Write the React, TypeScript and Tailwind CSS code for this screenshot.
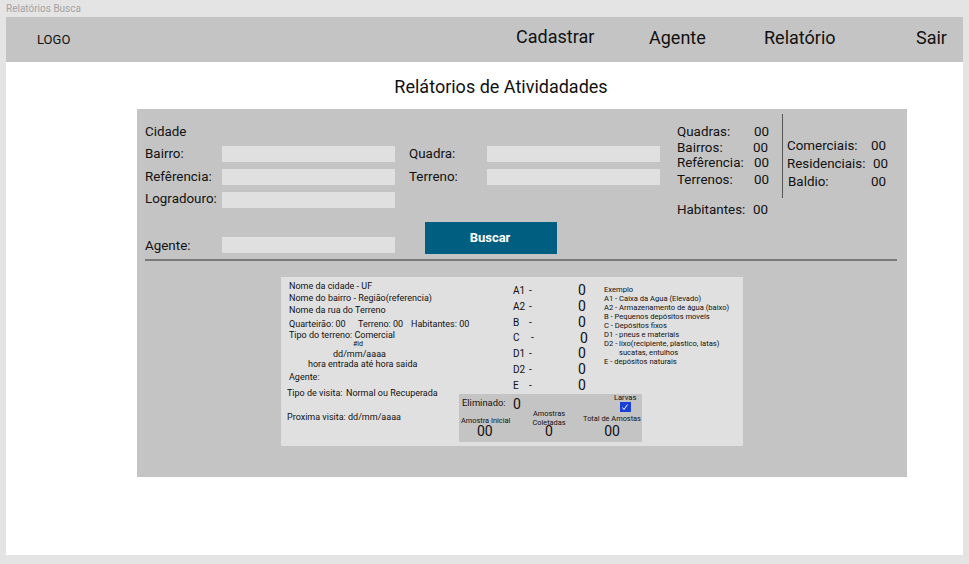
const navLinks = [
  { label: "Cadastrar", cls: "w-[133px] -mt-[2px]" },
  { label: "Agente", cls: "w-[115px]" },
  { label: "Relatório", cls: "w-[152px]" },
  { label: "Sair", cls: "" },
];

const containers = [
  { code: "A1", dash: "w-[16px]", y: "h-[16px]" },
  { code: "A2", dash: "w-[16px]", y: "h-[16px]" },
  { code: "B", dash: "w-[16px]", y: "h-[16px]" },
  { code: "C", dash: "w-[18px]", y: "h-[15px]" },
  { code: "D1", dash: "w-[16px]", y: "h-[16px]" },
  { code: "D2", dash: "w-[16px]", y: "h-[16px]" },
  { code: "E", dash: "w-[16px]", y: "h-[16px]" },
];

const examples = [
  "Exemplo",
  "A1 - Caixa da Agua (Elevado)",
  "A2 - Armazenamento de água (baixo)",
  "B - Pequenos depósitos moveis",
  "C - Depósitos fixos",
  "D1 - pneus e materiais",
  "D2 - lixo(recipiente, plastico, latas)",
];

function Field({ label, labelWidth }: { label: string; labelWidth: string }) {
  return (
    <div className="flex h-[23px] items-center">
      <span className={`${labelWidth} shrink-0 text-[13.4px] text-[#111]`}>{label}</span>
      <div className="h-[16px] w-[173px] bg-[#e0e0e0]" />
    </div>
  );
}

function Stat({ label, value, width, cls }: { label: string; value: string; width: string; cls: string }) {
  return (
    <div className={`flex items-center text-[13.4px] text-[#111] ${cls}`}>
      <span className={width}>{label}</span>
      <span>{value}</span>
    </div>
  );
}

function VisitCard() {
  return (
    <div className="ml-[136px] mt-[16px] flex h-[169px] w-[462px] bg-[#e0e0e0] text-[#111]">
      <div className="w-[178px] shrink-0 pl-[8px] pt-[3px] text-[9px] leading-[12px]">
        <div>Nome da cidade - UF</div>
        <div>Nome do bairro - Região(referencia)</div>
        <div>Nome da rua do Terreno</div>
        <div className="mt-[2px] flex whitespace-nowrap">
          <span className="w-[69px] shrink-0">Quarteirão: 00</span>
          <span className="w-[53px] shrink-0">Terreno: 00</span>
          <span className="shrink-0">Habitantes: 00</span>
        </div>
        <div className="leading-[10px]">Tipo do terreno: Comercial</div>
        <div className="pl-[64px] text-[7px] leading-[9px]">#id</div>
        <div className="pl-[44px] leading-[10px]">dd/mm/aaaa</div>
        <div className="pl-[19px] leading-[11px]">hora entrada até hora saida</div>
        <div className="mt-[1px]">Agente:</div>
        <div className="-ml-[2px] mt-[4px] flex whitespace-nowrap">
          <span className="w-[59px] shrink-0">Tipo de visita:</span>
          <span>Normal ou Recuperada</span>
        </div>
        <div className="-ml-[2px] mt-[12px]">Proxima visita: dd/mm/aaaa</div>
      </div>

      <div className="flex-1">
        <div className="flex h-[117px]">
          <div className="w-[145px] shrink-0 pl-[54px] pt-[5px]">
            {containers.map((row) => (
              <div key={row.code} className={`flex items-center ${row.y} text-[10px]`}>
                <span className={row.dash}>{row.code}</span>
                <span className="w-[49px]">-</span>
                <span className="text-[14px] leading-none">0</span>
              </div>
            ))}
          </div>
          <div className="whitespace-nowrap pt-[8px] text-[7.6px] leading-[9px]">
            {examples.map((line) => (
              <div key={line}>{line}</div>
            ))}
            <div className="pl-[15px]">sucatas, entulhos</div>
            <div>E - depósitos naturais</div>
          </div>
        </div>

        <div className="h-[48px] w-[183px] bg-[#c4c4c4]">
          <div className="flex h-[19px]">
            <span className="ml-[3px] mt-[3px] w-[51px] text-[9.4px] leading-[12px]">Eliminado:</span>
            <span className="mt-[2px] text-[14px] leading-[16px]">0</span>
            <div className="ml-[93px] flex flex-col items-center">
              <span className="text-[7.6px] leading-[8px]">Larvas</span>
              <span className="flex h-[10px] w-[11px] items-center justify-center bg-[#1a3fd6]">
                <svg viewBox="0 0 10 10" className="h-[10px] w-[10px]" fill="none" stroke="#fff" strokeWidth="1">
                  <path d="M2.5 5.5 4 7.5 7.5 2.5" />
                </svg>
              </span>
            </div>
          </div>
          <div className="flex">
            <div className="ml-[2px] mt-[4px] flex w-[50px] flex-col">
              <span className="whitespace-nowrap text-[7.4px] leading-[8px]">Amostra Inicial</span>
              <span className="pl-[16px] text-[14px] leading-[12px]">00</span>
            </div>
            <div className="ml-[20px] -mt-[4px] flex w-[36px] flex-col items-center">
              <span className="text-[7.4px] leading-[9px]">Amostras</span>
              <span className="text-[7.4px] leading-[9px]">Coletadas</span>
              <span className="-mt-[2px] text-[14px] leading-[12px]">0</span>
            </div>
            <div className="ml-[15px] mt-[2px] flex w-[60px] flex-col items-center">
              <span className="whitespace-nowrap text-[7.4px] leading-[8px]">Total de Amostas</span>
              <span className="mt-[2px] text-[14px] leading-[12px]">00</span>
            </div>
          </div>
        </div>
      </div>
    </div>
  );
}

export default function App() {
  return (
    <div className="h-[564px] w-[969px] overflow-hidden bg-[#e4e4e4] font-['Roboto',sans-serif]">
      <div className="flex h-[17px] items-center pl-[6px] text-[10px] text-[#a3a3a3]">Relatórios Busca</div>

      <div className="mx-[6px] h-[538px] bg-white">
        <header className="flex h-[45px] items-center bg-[#c4c4c4] pl-[31px] text-[#111]">
          <div className="w-[479px] text-[13px]">LOGO</div>
          <nav className="flex items-center pb-[5px] text-[18px]">
            {navLinks.map((link) => (
              <a key={link.label} className={link.cls}>
                {link.label}
              </a>
            ))}
          </nav>
        </header>

        <h1 className="mt-[13px] h-[34px] pl-[33px] text-center text-[18px] leading-[24px] text-[#111]">
          Relátorios de Atividadades
        </h1>

        <section className="ml-[131px] h-[368px] w-[770px] bg-[#c4c4c4] pl-[8px] pr-[10px]">
          <div className="flex h-[152px] border-b-2 border-[#7a7a7a]">
            <div className="w-[532px] shrink-0 pt-[11px]">
              <div className="h-[22px] pt-[1px] text-[13.4px] leading-[22px] text-[#111]">Cidade</div>
              <div className="flex">
                <div className="w-[264px]">
                  <Field label="Bairro:" labelWidth="w-[77px] pt-[2px]" />
                  <Field label="Refêrencia:" labelWidth="w-[77px] pt-[2px]" />
                  <Field label="Logradouro:" labelWidth="w-[77px]" />
                </div>
                <div>
                  <Field label="Quadra:" labelWidth="w-[78px] pt-[2px]" />
                  <Field label="Terreno:" labelWidth="w-[78px] pt-[2px]" />
                </div>
              </div>
              <div className="mt-[11px] flex items-start">
                <div className="mt-[11px] w-[280px]">
                  <Field label="Agente:" labelWidth="w-[77px] pt-[4px]" />
                </div>
                <button className="h-[32px] w-[132px] bg-[#005f80] pr-[2px] text-[13px] font-bold text-white">Buscar</button>
              </div>
            </div>

            <div className="flex">
              <div className="w-[105px] pt-[15px]">
                <Stat label="Quadras:" value="00" width="w-[77px]" cls="h-[16px]" />
                <Stat label="Bairros:" value="00" width="w-[76px]" cls="h-[16px]" />
                <Stat label="Refêrencia:" value="00" width="w-[77px]" cls="h-[15px]" />
                <Stat label="Terrenos:" value="00" width="w-[77px]" cls="h-[18px]" />
                <Stat label="Habitantes:" value="00" width="w-[76px]" cls="mt-[13px] h-[16px]" />
              </div>
              <div className="mt-[5px] h-[84px] w-px bg-[#555]" />
              <div className="pl-[4px] pt-[28px]">
                <Stat label="Comerciais:" value="00" width="w-[84px]" cls="h-[18px]" />
                <Stat label="Residenciais:" value="00" width="w-[86px]" cls="h-[18px]" />
                <Stat label="Baldio:" value="00" width="w-[83px]" cls="ml-[1px] h-[18px]" />
              </div>
            </div>
          </div>
          <VisitCard />
        </section>
      </div>
    </div>
  );
}
